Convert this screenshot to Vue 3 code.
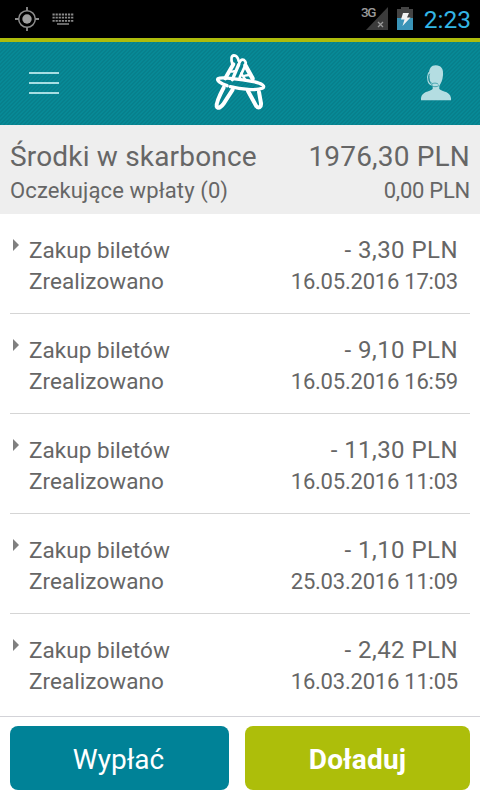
<template>
  <div class="screen">
    <div class="status-bar">
      <div class="status-left">
        <svg class="gps-icon" width="24" height="24" viewBox="0 0 24 24">
          <circle cx="12" cy="12" r="8.3" fill="none" stroke="#8c8c8c" stroke-width="1.5" />
          <circle cx="12" cy="12" r="4.7" fill="#a0a0a0" />
          <path d="M12 0v4M12 20v4M0 12h4M20 12h4" stroke="#8c8c8c" stroke-width="1.8" />
        </svg>
        <svg class="keyboard-icon" width="22" height="13" viewBox="0 0 22 13">
          <path
            d="M0.5 1.5h21M0.5 4.7h21M0.5 7.8h21"
            stroke="#8a8a8a"
            stroke-width="1.8"
            stroke-dasharray="2.2 0.9"
          />
          <path d="M5 11h12" stroke="#8a8a8a" stroke-width="1.5" />
        </svg>
      </div>
      <div class="status-right">
        <svg class="signal-icon" width="29" height="26" viewBox="0 0 29 26">
          <path d="M28 2v23H6z" fill="#3b3b3b" />
          <path d="M18 17l5 5M23 17l-5 5" stroke="#999" stroke-width="1.3" />
          <text x="1" y="12" class="network">3G</text>
        </svg>
        <svg class="battery-icon" width="16" height="24" viewBox="0 0 16 24">
          <path d="M0 2h4V0h8v2h4v9H0z" fill="#444" />
          <path d="M0 11h16v12H0z" fill="#3a94b8" />
          <path d="M6 6h6l-2 4.500h3.500L5.500 19l2-6.500H4z" fill="#f2f2f2" />
        </svg>
        <span class="clock">2:23</span>
      </div>
    </div>

    <header class="app-header">
      <button class="icon-btn menu-btn" aria-label="Menu">
        <span></span>
        <span></span>
        <span></span>
      </button>
      <svg class="logo" width="56" height="64" viewBox="0 0 168 192">
        <g fill="none" stroke="#fff" stroke-width="8" stroke-linecap="round">
          <path d="M61 42C56 26 58 17 66 16C74 16 78 24 80 33" />
          <path d="M64 43L40 85" stroke-width="12" />
          <path d="M80 44L61 89" stroke-width="10" />
          <path d="M60 65L71 63" stroke-width="7" />
          <path d="M80 46C82 33 89 26 96 30C103 35 102 43 98 50L83 83" />
          <path d="M100 46L122 86" stroke-width="13" />
          <path d="M88 70L101 91M99 77L112 75" stroke-width="7" />
          <path
            d="M45 107C27 101 13 92 18 86C28 80 89 88 124 95C151 101 162 109 151 115C134 122 87 118 55 110"
            stroke-width="10"
          />
          <path
            d="M35 113C24 134 12 158 14 169C17 179 29 170 35 161L62 119"
            stroke-width="12"
          />
          <path
            d="M108 123L132 167C140 177 148 172 147 160L141 126"
            stroke-width="12"
          />
        </g>
      </svg>
      <button class="icon-btn account-btn" aria-label="Konto">
        <svg width="30" height="36" viewBox="0 0 90 108">
          <path
            d="M44 1C61 1 68 12 66 31C65 46 59 57 55 63V72C65 81 87 79 90 99V106H0V99C3 79 25 81 35 72V63C27 54 24 41 24 26C24 11 31 1 44 1Z"
            fill="#b4dde2"
          />
          <path
            d="M23 22C16 41 21 59 36 61"
            fill="none"
            stroke="#b4dde2"
            stroke-width="3.5"
          />
          <path
            d="M26 26C21 42 25 53 34 55M54 61C50 67 32 66 32 60C32 53 48 53 52 58"
            fill="none"
            stroke="#2995a0"
            stroke-width="2.5"
          />
        </svg>
      </button>
    </header>

    <section class="summary">
      <div class="line balance">
        <span class="balance-label">Środki w skarbonce</span>
        <span class="balance-value">1976,30 PLN</span>
      </div>
      <div class="line pending">
        <span class="pending-label">Oczekujące wpłaty (0)</span>
        <span class="pending-value">0,00 PLN</span>
      </div>
    </section>

    <ul class="history">
      <li v-for="item in transactions" :key="item.date" class="entry">
        <span class="arrow"></span>
        <div class="entry-body">
          <div class="line">
            <span class="entry-title">{{ item.title }}</span>
            <span class="amount">{{ item.amount }}</span>
          </div>
          <div class="line">
            <span class="entry-status">{{ item.status }}</span>
            <span class="date">{{ item.date }}</span>
          </div>
        </div>
      </li>
    </ul>

    <footer class="actions">
      <button class="btn withdraw">Wypłać</button>
      <button class="btn top-up">Doładuj</button>
    </footer>
  </div>
</template>

<script setup>
import { ref } from 'vue'

const transactions = ref([
  { title: 'Zakup biletów', status: 'Zrealizowano', amount: '- 3,30 PLN', date: '16.05.2016 17:03' },
  { title: 'Zakup biletów', status: 'Zrealizowano', amount: '- 9,10 PLN', date: '16.05.2016 16:59' },
  { title: 'Zakup biletów', status: 'Zrealizowano', amount: '- 11,30 PLN', date: '16.05.2016 11:03' },
  { title: 'Zakup biletów', status: 'Zrealizowano', amount: '- 1,10 PLN', date: '25.03.2016 11:09' },
  { title: 'Zakup biletów', status: 'Zrealizowano', amount: '- 2,42 PLN', date: '16.03.2016 11:05' }
])
</script>

<style>
body {
  margin: 0;
}
</style>

<style scoped>
.screen {
  display: flex;
  flex-direction: column;
  width: 480px;
  height: 800px;
  overflow: hidden;
  background: #fff;
  color: #666;
  font-family: Roboto, sans-serif;
}
.status-bar {
  display: flex;
  justify-content: space-between;
  box-sizing: border-box;
  height: 38px;
  padding: 0 9px 0 15px;
  background: #000;
}
.status-left,
.status-right {
  display: flex;
  align-items: flex-start;
}
.gps-icon {
  margin-top: 7px;
}
.keyboard-icon {
  margin: 13px 0 0 13px;
}
.signal-icon {
  margin-top: 5px;
}
.network {
  fill: #999;
  font-size: 13.5px;
  font-weight: 500;
  letter-spacing: -1.5px;
}
.battery-icon {
  margin: 7px 11px 0 8px;
}
.clock {
  color: #33b5e5;
  font-size: 24.5px;
  line-height: 40px;
}
.app-header {
  display: flex;
  align-items: center;
  justify-content: space-between;
  box-sizing: border-box;
  height: 87px;
  padding: 0 29px 3px;
  border-top: 4px solid #adbc0c;
  background: repeating-linear-gradient(135deg, #078996 0 1.4px, #07808c 1.4px 2.828px);
}
.icon-btn {
  padding: 0;
  border: none;
  background: none;
  cursor: pointer;
}
.icon-btn svg {
  display: block;
}
.menu-btn {
  display: flex;
  flex-direction: column;
  gap: 8px;
  margin-top: 2px;
}
.menu-btn span {
  width: 30px;
  height: 2px;
  background: #a6dee3;
}
.account-btn {
  margin-top: 2px;
}
.summary {
  box-sizing: border-box;
  height: 89px;
  padding: 14px 10px 0;
  background: #eee;
}
.line {
  display: flex;
  justify-content: space-between;
  white-space: nowrap;
}
.balance {
  font-size: 28px;
  letter-spacing: 0.18px;
  line-height: 35px;
}
.pending {
  font-size: 22px;
  line-height: 34px;
}
.pending-label {
  letter-spacing: 0.12px;
}
.pending-value {
  letter-spacing: -0.25px;
}
.history {
  flex: 1;
  margin: 0;
  padding: 0 10px;
  overflow: hidden;
  list-style: none;
}
.entry {
  display: flex;
  align-items: flex-start;
  box-sizing: border-box;
  height: 100px;
  padding: 21px 12px 0 3px;
  border-bottom: 1px solid #d5d5d5;
}
.entry:last-child {
  border-bottom: none;
}
.arrow {
  margin: 4px 10px 0 0;
  border: 6px solid transparent;
  border-right-width: 0;
  border-left-color: #808080;
}
.entry-body {
  flex: 1;
  font-size: 22.5px;
  letter-spacing: 0.06px;
  line-height: 31px;
}
.amount {
  font-size: 24px;
  letter-spacing: 0.45px;
}
.date {
  font-size: 22px;
  letter-spacing: -0.22px;
}
.actions {
  display: flex;
  gap: 16px;
  box-sizing: border-box;
  height: 84px;
  padding: 9px 10px 10px;
  border-top: 1px solid #d3d3d8;
}
.btn {
  height: 64px;
  padding: 2px 0 0;
  border: none;
  border-radius: 8px;
  color: #fff;
  font-family: inherit;
  font-size: 28px;
  cursor: pointer;
}
.withdraw {
  width: 219px;
  padding-right: 2px;
  background: #008297;
}
.top-up {
  width: 225px;
  background: #adbe0a;
  font-weight: 700;
  letter-spacing: 0.15px;
}
</style>
